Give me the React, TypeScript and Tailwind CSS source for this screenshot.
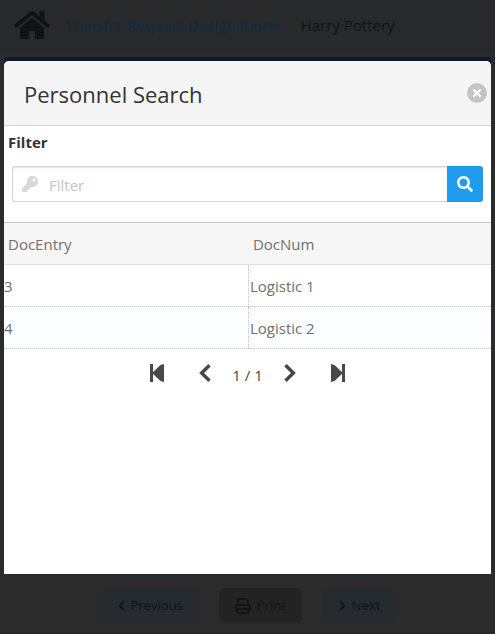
import React from "react";
import {
  FaChevronDown,
  FaChevronLeft,
  FaChevronRight,
  FaHome,
  FaKey,
  FaSearch,
  FaTimes,
} from "react-icons/fa";

const rows = [
  { docEntry: "3", docNum: "Logistic 1" },
  { docEntry: "4", docNum: "Logistic 2" },
];

function StepIcon({ flip = false }: { flip?: boolean }) {
  return (
    <svg
      viewBox="0 0 14 18"
      className={flip ? "h-[18px] w-[14px] rotate-180" : "h-[18px] w-[14px]"}
      fill="currentColor"
      aria-hidden="true"
    >
      <path d="M0 0h3v18H0z" />
      <path d="M14 0v18L10.5 17 2 9 10.5 1z" />
    </svg>
  );
}

function Chevron({ flip = false }: { flip?: boolean }) {
  return (
    <svg
      viewBox="0 0 12 18"
      className={flip ? "h-[18px] w-3 rotate-180" : "h-[18px] w-3"}
      fill="none"
      stroke="currentColor"
      strokeWidth="3.4"
      aria-hidden="true"
    >
      <path d="M10.5 1.2L2.6 9l7.9 7.8" />
    </svg>
  );
}

function PrintIcon() {
  return (
    <svg
      viewBox="0 0 16 16"
      className="size-4"
      fill="none"
      stroke="currentColor"
      strokeWidth="2"
      strokeLinejoin="round"
      aria-hidden="true"
    >
      <path d="M3 7V1h8l2 2v4" />
      <path d="M3 12H1V9q0-2 2-2h10q2 0 2 2v3h-2" />
      <path d="M3 11h10v4H3z" />
    </svg>
  );
}

function TopBar() {
  return (
    <header className="flex h-[53px] items-center bg-[#27292b] pl-3.5 text-[15px]">
      <a href="#home" aria-label="Home" className="pb-1 text-[#121212]">
        <FaHome className="size-9" />
      </a>
      <button type="button" className="ml-3.5 flex items-center whitespace-nowrap pb-0.5 text-[#0f2e45]">
        Transfer Request Designation
        <FaChevronDown className="size-3" />
      </button>
      <span className="ml-[18px] whitespace-nowrap pb-0.5 text-[#121314]">Harry Pottery</span>
    </header>
  );
}

function BottomBar() {
  return (
    <footer className="flex h-[60px] items-start justify-center gap-5 border-b-2 border-[#2a272b] pt-3.5 text-[13px] text-[#131415]">
      <button type="button" className="flex h-[35px] items-center gap-1 rounded-md bg-[#252b2e] px-4">
        <FaChevronLeft className="size-[11px]" />
        Previous
      </button>
      <button type="button" className="flex h-[35px] items-center gap-1.5 rounded-md bg-[#232323] px-4">
        <PrintIcon />
        Print
      </button>
      <button type="button" className="flex h-[35px] items-center gap-1 rounded-md bg-[#252b2e] px-[15px]">
        <FaChevronRight className="size-[11px]" />
        Next
      </button>
    </footer>
  );
}

function FilterForm() {
  return (
    <form className="h-24" onSubmit={(e) => e.preventDefault()}>
      <label htmlFor="filter" className="block px-1 pt-[5px] text-[15px] leading-[22px] font-bold text-[#333]">
        Filter
      </label>
      <div className="mx-2 mt-[13px] flex h-9">
        <div className="flex min-w-0 flex-1 items-center gap-[11px] rounded-l-[3px] border border-r-0 border-[#d5d5d5] bg-white pl-[9px] shadow-[inset_0_1px_2px_rgba(0,0,0,0.1)]">
          <FaKey className="size-4 shrink-0 text-[#d8d8d8]" />
          <input
            id="filter"
            type="text"
            placeholder="Filter"
            className="h-full min-w-0 flex-1 bg-transparent pt-0.5 text-[15px] outline-none placeholder:text-[#c4c4c4]"
          />
        </div>
        <button
          type="submit"
          aria-label="Search"
          className="flex w-9 items-center justify-center rounded-r-[3px] bg-[#209cee] text-white"
        >
          <FaSearch className="size-4" />
        </button>
      </div>
    </form>
  );
}

function Results() {
  return (
    <table className="w-full table-fixed border-separate border-spacing-0 text-left text-[15px] text-[#707070]">
      <thead>
        <tr className="h-[43px] bg-[#f6f6f6]">
          <th className="w-[50.3%] border-t border-b border-t-[#c8c8c8] border-b-[#dedede] px-1 pt-0.5 font-normal">DocEntry</th>
          <th className="border-t border-b border-t-[#c8c8c8] border-b-[#dedede] px-1 pt-0.5 font-normal">DocNum</th>
        </tr>
      </thead>
      <tbody>
        {rows.map((row) => (
          <tr key={row.docEntry} className="h-[42px] even:bg-[#fbfdff]">
            <td className="border-r border-b border-dotted border-[#c5c5c5] p-0 pt-0.5">{row.docEntry}</td>
            <td className="border-b border-dotted border-[#c5c5c5] p-0 pt-0.5 pl-px">{row.docNum}</td>
          </tr>
        ))}
      </tbody>
    </table>
  );
}

function Pager() {
  return (
    <nav aria-label="Pages" className="flex h-12 items-center justify-center text-[#484848]">
      <button type="button" aria-label="First page">
        <StepIcon />
      </button>
      <button type="button" aria-label="Previous page" className="ml-[35px]">
        <Chevron />
      </button>
      <span className="mx-[21px] pt-1 text-[15px]">1 / 1</span>
      <button type="button" aria-label="Next page">
        <Chevron flip />
      </button>
      <button type="button" aria-label="Last page" className="ml-[35px]">
        <StepIcon flip />
      </button>
    </nav>
  );
}

export default function App() {
  return (
    <div className="flex min-h-screen flex-col bg-[#2b2b2b] font-['Open_Sans',sans-serif]">
      <TopBar />
      <div className="mt-1 flex flex-1 flex-col rounded-t-md px-1">
        <div className="flex flex-1 flex-col rounded-t-[3px] bg-[#0e1a2e] pt-1">
          <section
            role="dialog"
            aria-labelledby="dialog-title"
            className="flex flex-1 flex-col rounded-t-[5px] bg-white"
          >
            <div className="flex h-[65px] items-center justify-between rounded-t-[5px] border-b border-[#d8d8d8] bg-[#f5f5f5] pr-1 pl-5">
              <h1 id="dialog-title" className="pt-0.5 text-[22px] text-[#333]">
                Personnel Search
              </h1>
              <button
                type="button"
                aria-label="Close"
                className="flex size-5 items-center justify-center rounded-full bg-[#c4c4c4] text-white"
              >
                <FaTimes className="size-3" />
              </button>
            </div>
            <FilterForm />
            <Results />
            <Pager />
          </section>
        </div>
      </div>
      <BottomBar />
    </div>
  );
}
